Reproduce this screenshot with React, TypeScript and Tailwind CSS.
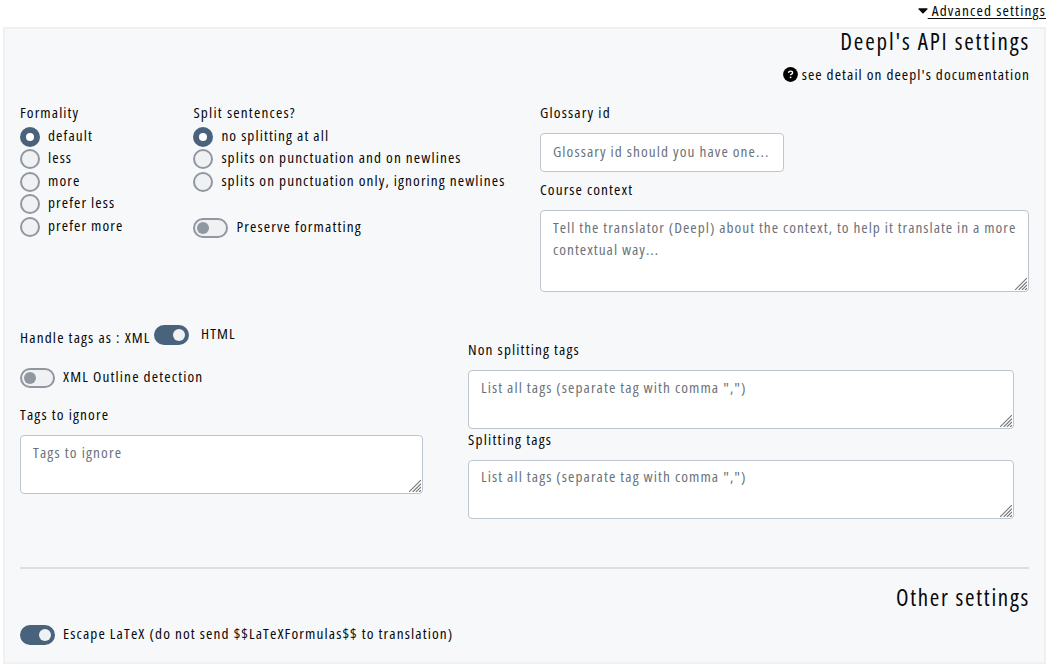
import React from "react";

function Txt({ children, className = "" }: { children: React.ReactNode; className?: string }) {
  return <span className={`block whitespace-nowrap ${className}`}>{children}</span>;
}

function Toggle({ on = false }: { on?: boolean }) {
  return (
    <span
      role="switch"
      aria-checked={on}
      className={`flex h-5 w-[35px] shrink-0 items-center rounded-full border-2 px-[2px] ${
        on ? "justify-end border-[#4a637d] bg-[#4a637d]" : "justify-start border-[#9197a1] bg-[#eff1f3]"
      }`}
    >
      <span className={`size-3 rounded-full ${on ? "bg-[#eff1f3]" : "bg-[#9197a1]"}`} />
    </span>
  );
}

function Radio({ on = false, label }: { on?: boolean; label: string }) {
  return (
    <div className="flex h-[22.5px] items-start">
      <span
        role="radio"
        aria-checked={on}
        className={`flex size-5 shrink-0 items-center justify-center rounded-full border-2 ${
          on ? "border-[#4a637d] bg-[#4a637d]" : "border-[#9197a1] bg-[#eff1f3]"
        }`}
      >
        {on && <span className="size-2 rounded-full bg-white" />}
      </span>
      <Txt className="-mt-[3px] ml-2">{label}</Txt>
    </div>
  );
}

const field =
  "block rounded-[4px] border border-[#bcc5d0] bg-white pl-3 placeholder:text-[#6a737b] placeholder:opacity-100 outline-none";

function Area({ placeholder, className, inset = "pt-[5px]" }: { placeholder: string; className: string; inset?: string }) {
  return (
    <div className={`relative ${className}`}>
      <textarea className={`${field} size-full resize-none overflow-hidden pr-[6px] ${inset}`} placeholder={placeholder} />
      <svg className="pointer-events-none absolute right-[2px] bottom-[2px] size-3" viewBox="0 0 13 13">
        <path d="M0 13L13 0M4 13L13 4M7.5 13L13 7.5M11 13L13 11" stroke="#777" strokeWidth="1.2" />
      </svg>
    </div>
  );
}

export default function App() {
  return (
    <div className="h-[667px] w-[1049px] overflow-hidden bg-white font-['Open_Sans','Noto_Sans',sans-serif] text-[15.3px] leading-[22.5px] text-[#08090a] [font-stretch:75%] tracking-[1.09px]">
      <header className="flex h-[27px] items-start justify-end pr-[3px]">
        <div className="-mt-px flex items-center">
          <svg className="mt-[2px] h-[6px] w-[10px]" viewBox="0 0 10 6"><path d="M0.8 0.3H9.2Q9.9 0.6 9.4 1.2L5.6 5.2Q5 5.7 4.4 5.2L0.6 1.2Q0.1 0.6 0.8 0.3Z" fill="currentColor" /></svg>
          <Txt className="whitespace-pre tracking-[1.18px] underline decoration-1 underline-offset-2">{" Advanced settings"}</Txt>
        </div>
      </header>
      <main className="ml-[3px] h-[637px] w-[1043px] border-2 border-[#eff0f1] bg-[#f7f8fa] px-[15px]">
        <div className="flex h-[73px] flex-col items-end">
          <h2 className="-mt-px text-[23px] leading-[26px] tracking-[1.84px]"><Txt className="-mr-px">Deepl's API settings</Txt></h2>
          <div className="mt-[9px] flex items-center gap-1">
            <svg className="size-[15px]" viewBox="0 0 512 512"><circle cx="256" cy="256" r="252" fill="#000" /><path d="M188 200c8-80 139-75 139-5 0 54-68 48-68 90" fill="none" stroke="#fff" strokeWidth="48" /><circle cx="259" cy="350" r="30" fill="#fff" /></svg>
            <Txt className="-mr-px tracking-[1.07px]">see detail on deepl's documentation</Txt>
          </div>
        </div>
        <section className="flex h-[222px]">
          <div className="w-[173.4px]">
            <Txt className="-mt-px mb-[3.2px]">Formality</Txt>
            <Radio on label="default" />
            <Radio label="less" />
            <Radio label="more" />
            <Radio label="prefer less" />
            <Radio label="prefer more" />
          </div>
          <div className="w-[346.6px]">
            <Txt className="-mt-px mb-[3.2px] tracking-[1.2px]">Split sentences?</Txt>
            <Radio on label="no splitting at all" />
            <Radio label="splits on punctuation and on newlines" />
            <Radio label="splits on punctuation only, ignoring newlines" />
            <div className="mt-[23.8px] flex gap-2"><Toggle /><Txt className="-mt-[3px] tracking-[1.14px]">Preserve formatting</Txt></div>
          </div>
          <div className="w-[489px]">
            <Txt className="-mt-px tracking-[1.18px]">Glossary id</Txt>
            <input className={`${field} mt-[9.5px] h-[39px] w-[244px] pt-[4px] pb-[7px]`} placeholder="Glossary id should you have one..." />
            <Txt className="mt-[6px]">Course context</Txt>
            <Area className="mt-[9px] h-[82px] w-[489px] tracking-[1.02px]" placeholder="Tell the translator (Deepl) about the context, to help it translate in a more contextual way..." />
          </div>
        </section>
        <section className="flex h-[243px]">
          <div className="w-[448px]">
            <div className="flex h-[43px] items-start pt-[1px]">
              <Txt className="mt-[1px] w-[131px] tracking-[1.15px]">Handle tags as : XML</Txt>
              <span className="ml-[3px]"><Toggle on /></span>
              <Txt className="-mt-[3px] ml-3">HTML</Txt>
            </div>
            <div className="flex h-[36px] gap-2 pt-[1px]"><Toggle /><Txt className="-mt-[3px] tracking-[1.15px]">XML Outline detection</Txt></div>
            <Txt className="tracking-[1.16px]">Tags to ignore</Txt>
            <Area className="mt-[9px] h-[59px] w-[403px] tracking-[1.16px]" placeholder="Tags to ignore" />
          </div>
          <div className="w-[546px] pt-[14px]">
            <Txt className="tracking-[1.14px]">Non splitting tags</Txt>
            <Area className="mt-[9.5px] h-[59px] w-[546px]" placeholder={'List all tags (separate tag with comma ",")'} />
            <Txt className="-mt-px tracking-[1.2px]">Splitting tags</Txt>
            <Area inset="pt-[4px]" className="mt-[9px] h-[59px] w-[546px]" placeholder={'List all tags (separate tag with comma ",")'} />
          </div>
        </section>
        <div className="h-[2px] bg-[#dcdee1]" />
        <h2 className="mt-[15px] flex h-[41px] justify-end text-[23px] leading-[26px] tracking-[1.72px]"><Txt className="-mr-px">Other settings</Txt></h2>
        <div className="flex gap-2"><Toggle on /><Txt className="-mt-[3px] tracking-[1.13px]">Escape LaTeX (do not send $$LaTeXFormulas$$ to translation)</Txt></div>
      </main>
    </div>
  );
}
